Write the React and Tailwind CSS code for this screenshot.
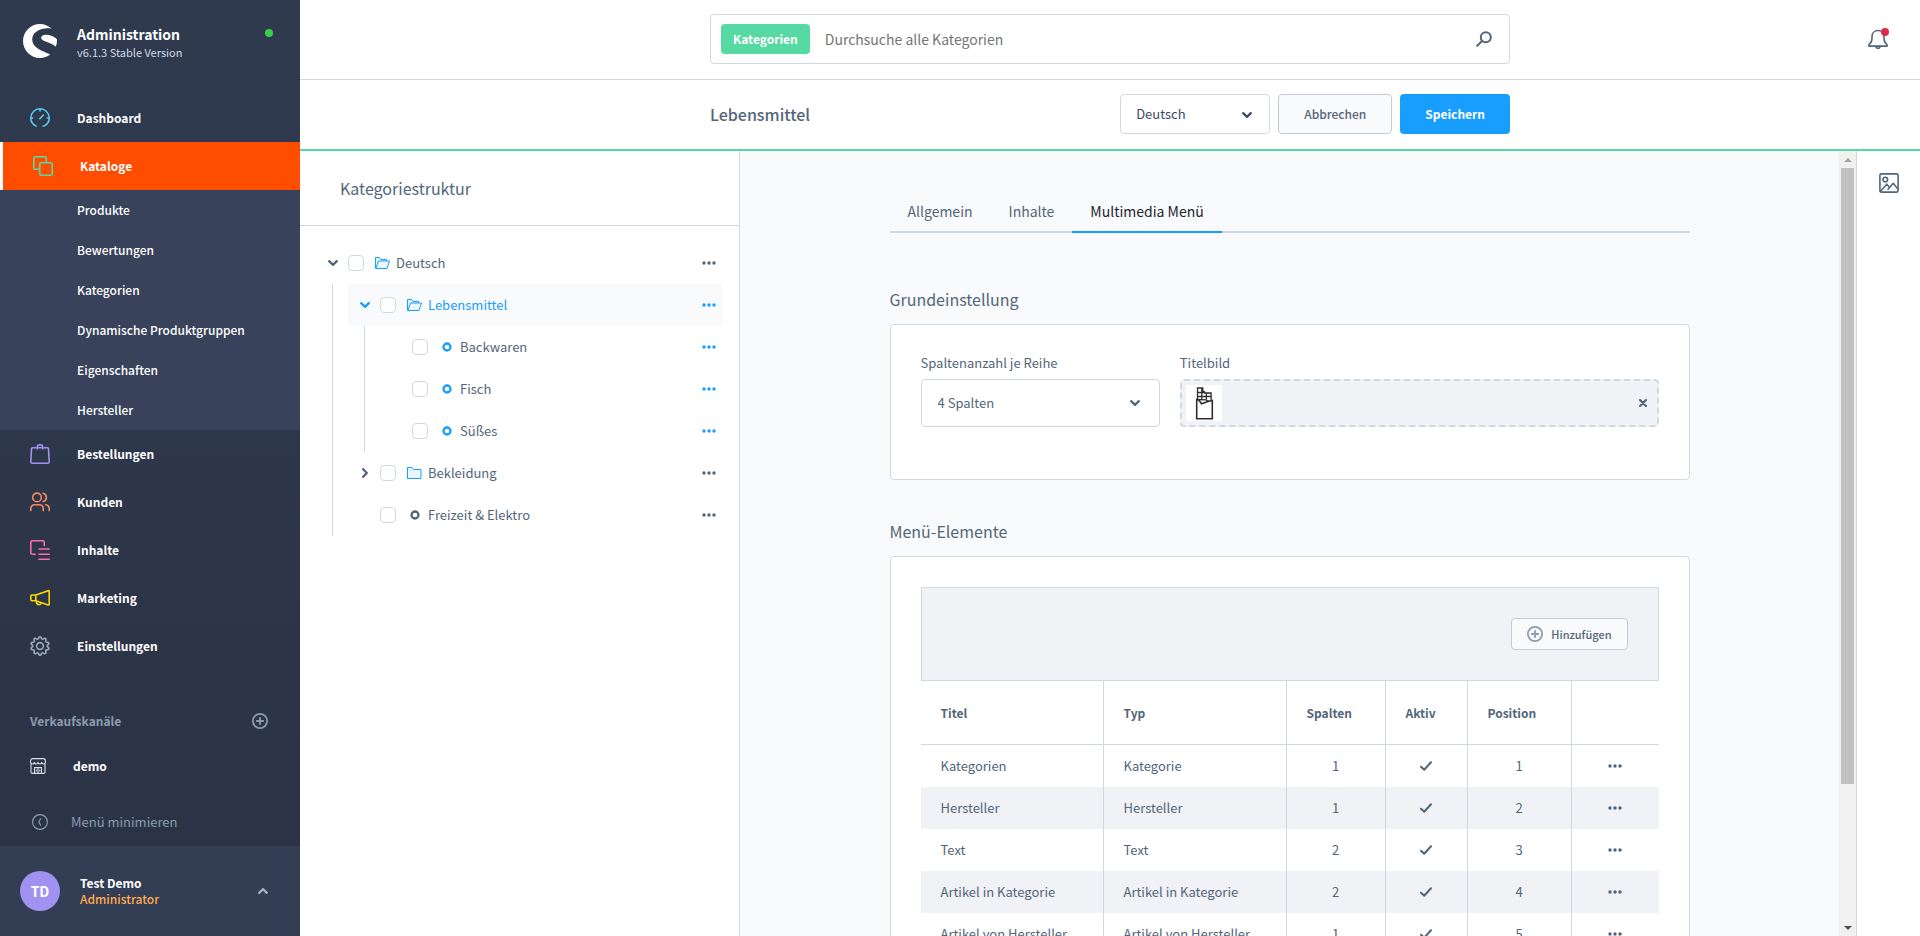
import { useState } from 'react';
import clsx from 'clsx';

const stroke = {
  fill: 'none',
  stroke: 'currentColor',
  strokeWidth: 1.6,
  strokeLinecap: 'round',
  strokeLinejoin: 'round',
};

const Logo = () => (
  <svg viewBox="0 0 34 34" className="size-[34px] shrink-0 text-white" fill="currentColor" aria-hidden="true">
    <path d="M28.6 4.6C25.4 1.7 21.4 0 17 0 7.6 0 0 7.6 0 17s7.6 17 17 17c3.8 0 7.4-1.3 10.2-3.4-.1-.3-1.2-.8-3.6-1.7C17.5 26.600 9.200 23 9.200 15.600 9.200 8.700 15.500 4.800 22.300 4.400c2.500-.2 5 .1 6.300.2z" />
    <path d="M32.8 14.2c-2.6-2-6.6-3.5-10-3.400-3.300.1-4.900 1.600-4.600 3.300.4 2.300 3.600 3.200 7 4.500 2.700 1 5.500 2 7.600 4.200 1-2.400 1.400-5 1.100-7.700-.3-.3-.7-.6-1.100-.9z" />
  </svg>
);

const DashboardIcon = () => (
  <svg viewBox="0 0 20 20" className="size-5" {...stroke}>
    <path d="M6.300 18H6C2.800 16.500.8 13.500.8 10a9.200 9.200 0 0 1 18.400 0c0 3.500-2 6.500-5.200 8h-.9" />
    <path d="M10 1v2M1 10h1.700M17.300 10H19M9.800 10.700l3.700-3.700" />
  </svg>
);

const CatalogIcon = () => (
  <svg viewBox="0 0 20 20" className="size-5" {...stroke}>
    <path d="M5.500 13.300H2.200C1.400 13.300.8 12.700.8 11.900V2.200C.8 1.400 1.400.8 2.200.8h9.700c.8 0 1.400.6 1.400 1.400v3.400" />
    <rect x="6.700" y="6.700" width="12.500" height="12.500" rx="1.400" />
  </svg>
);

const OrdersIcon = () => (
  <svg viewBox="0 0 20 20" className="size-5" {...stroke}>
    <path d="M5.600 3.700H2.700c-.7 0-1.200.5-1.200 1.200L.8 17.900c0 .8.5 1.300 1.300 1.300h15.800c.8 0 1.300-.5 1.300-1.300l-.7-13c0-.7-.5-1.200-1.200-1.200h-2.900M8.400 3.700h3.200" />
    <path d="M7.200 5V3.500a2.800 2.800 0 0 1 5.600 0V5" />
  </svg>
);

const CustomersIcon = () => (
  <svg viewBox="0 0 20 20" className="size-5" {...stroke}>
    <circle cx="7" cy="5.400" r="4.300" />
    <path d="M.8 18.600v-2c0-2.200 1.600-3.800 3.800-3.800h4.800c2.200 0 3.800 1.600 3.800 3.800v2M13.200 1.300a4.300 4.300 0 0 1 0 8.300M15.600 12.800c2.200.3 3.600 1.800 3.600 3.800v2" />
  </svg>
);

const ContentIcon = () => (
  <svg viewBox="0 0 20 20" className="size-5" {...stroke}>
    <path d="M5.300 14.200H2.200C1.400 14.200.8 13.600.8 12.800V2.200C.8 1.400 1.400.8 2.200.8h10.600c.8 0 1.400.6 1.400 1.400v3.200M9 9h10.200M9 14.200h10.200M9 19.200h10.200" />
  </svg>
);

const MarketingIcon = () => (
  <svg viewBox="0 0 20 20" className="size-5" {...stroke}>
    <path d="M5.800 7H2c-.7 0-1.200.4-1.200 1.100v3.500c0 .7.500 1.200 1.200 1.200h3.800M5.800 7v5.800M5.800 7l12.400-4.300c.6-.2 1 .1 1 .7v12.800c0 .6-.4.900-1 .7L5.800 12.800M6.300 13.200c.1 2 1 3.500 2.700 3.500 1.200 0 2-.7 2.100-1.700" />
  </svg>
);

const TEETH = 10;
const gearPath = Array.from({ length: TEETH * 4 }, (_, i) => {
  const radius = i % 4 < 2 ? 9.2 : 7.4;
  const angle = ((i - 0.5) / (TEETH * 4)) * Math.PI * 2 - Math.PI / 2;
  return `${i ? 'L' : 'M'}${(10 + radius * Math.cos(angle)).toFixed(2)} ${(10 + radius * Math.sin(angle)).toFixed(2)}`;
}).join('') + 'z';

const SettingsIcon = () => (
  <svg viewBox="0 0 20 20" className="size-5" {...stroke}>
    <path d={gearPath} />
    <circle cx="10" cy="10" r="3.400" />
  </svg>
);

const PlusCircle = () => (
  <svg viewBox="0 0 16 16" className="size-4" {...stroke} strokeWidth="1.800">
    <circle cx="8" cy="8" r="7.100" />
    <path d="M8 4.800v6.400M4.800 8h6.400" />
  </svg>
);

const StoreIcon = () => (
  <svg viewBox="0 0 16 16" className="size-4" {...stroke} strokeWidth="1.100">
    <path d="M2.500.6h11c1.200 0 1.900 1 1.900 2.300v1.400c0 1-.8 1.700-1.800 1.700s-1.900-.7-1.900-1.700c0 1-.8 1.700-1.800 1.700S8 5.300 8 4.300C8 5.300 7.100 6 6.100 6s-1.800-.7-1.800-1.700C4.300 5.300 3.500 6 2.400 6S.6 5.300.6 4.300V2.900C.6 1.600 1.300.6 2.500.6z" />
    <path d="M1 6v8.200c0 .8.500 1.200 1.200 1.200h11.600c.7 0 1.200-.4 1.200-1.200V6M4.500 15.400V9.600h7v5.800M8 9.600v5.800M6.200 12v1M9.800 12v1" />
  </svg>
);

const CollapseIcon = () => (
  <svg viewBox="0 0 16 16" className="size-4" {...stroke} strokeWidth="1.200">
    <circle cx="8" cy="8" r="7.400" />
    <path d="M8.600 4.800 6.800 8l1.800 3.200" />
  </svg>
);

const Chevron = ({ className }) => (
  <svg viewBox="0 0 10 10" className={clsx('size-[10px] shrink-0', className)} {...stroke} strokeWidth="2.300" aria-hidden="true">
    <path d="m1.200 3.200 3.800 3.600 3.800-3.600" />
  </svg>
);

const Dots = () => (
  <svg viewBox="0 0 14 4" className="h-1 w-[14px]" fill="currentColor" aria-hidden="true">
    <circle cx="2" cy="2" r="1.700" />
    <circle cx="7" cy="2" r="1.700" />
    <circle cx="12" cy="2" r="1.700" />
  </svg>
);

const SearchIcon = () => (
  <svg viewBox="0 0 16 16" className="size-4" {...stroke} strokeWidth="2">
    <circle cx="9.800" cy="6.200" r="5" />
    <path d="m6 10-4.800 4.800" />
  </svg>
);

const BellIcon = () => (
  <svg viewBox="0 0 22 22" className="size-[22px]" {...stroke}>
    <path d="M1.700 17.400c0-.6.300-.9.800-1.300C4.500 14.500 5 13 5 10.300V8.500C5 5 7.300 2.500 11 2.500S17 5 17 8.500v1.800c0 2.700.5 4.200 2.500 5.800.5.400.8.700.8 1.300 0 .4-.3.700-.7.700H2.400c-.4 0-.7-.3-.7-.7z" />
    <path d="M9 18.200c0 1.200.8 2 2 2s2-.8 2-2" />
  </svg>
);

const ImageIcon = () => (
  <svg viewBox="0 0 20 20" className="size-5" {...stroke}>
    <rect x=".9" y=".9" width="18.200" height="18.200" rx="1.500" />
    <circle cx="6.300" cy="6.500" r="2.300" />
    <path d="m1.500 18.300 6.300-7.100 2 2.300M9 16.200l5.200-5.900 4.700 5.600" />
  </svg>
);

const FolderOpen = () => (
  <svg viewBox="0 0 15 12" className="h-3 w-[15px] shrink-0 fill-[#e9f5ff]" stroke="#189eff" aria-hidden="true">
    <path d="M.5 11.500V.5h4l1.500 2h5.500v1.500" />
    <path d="M3.500 4h11l-2.500 7.500H.8z" />
  </svg>
);

const Folder = () => (
  <svg viewBox="0 0 15 12" className="h-3 w-[15px] shrink-0 fill-[#e9f5ff]" stroke="#189eff" aria-hidden="true">
    <path d="M.5.5h4.500l1.500 2h7.500v9H.5z" />
  </svg>
);

const Ring = ({ active }) => (
  <svg viewBox="0 0 10 10" className={clsx('size-[10px] shrink-0', active ? 'text-[#189eff]' : 'text-[#52667a]')} fill="none" stroke="currentColor" strokeWidth="2.300" aria-hidden="true">
    <circle cx="5" cy="5" r="3.500" />
  </svg>
);

const Chocolate = () => (
  <svg viewBox="0 0 36 36" className="size-9 bg-white" fill="none" stroke="#2f2f2f" strokeWidth="1.300" role="img" aria-label="Schokolade">
    <path d="M11.500 14V3h5.300v2.800l2 1.200v1h6.300v7M11.500 7.500h7.500M11.500 11.500h13.600M15.800 3.500V14M20.300 8v6.500" />
    <path d="M10.700 14.500v19.300h15.600V15.500l-4.300 1-6.500 2.300-2.700-3.800z" strokeWidth="1.600" />
    <path d="M10.700 14.500l9.300.3 3 1.500" />
  </svg>
);

const navItems = [
  { label: 'Dashboard', icon: DashboardIcon, color: 'text-[#5ac8ec]' },
  {
    label: 'Kataloge',
    icon: CatalogIcon,
    color: 'text-[#57d9a3]',
    active: true,
    children: ['Produkte', 'Bewertungen', 'Kategorien', 'Dynamische Produktgruppen', 'Eigenschaften', 'Hersteller'],
  },
  { label: 'Bestellungen', icon: OrdersIcon, color: 'text-[#a092f0]' },
  { label: 'Kunden', icon: CustomersIcon, color: 'text-[#f88962]' },
  { label: 'Inhalte', icon: ContentIcon, color: 'text-[#ff68b4]' },
  { label: 'Marketing', icon: MarketingIcon, color: 'text-[#ffd700]' },
  { label: 'Einstellungen', icon: SettingsIcon, color: 'text-[#9aa8b5]' },
];

const tree = [
  {
    label: 'Deutsch',
    open: true,
    children: [
      {
        label: 'Lebensmittel',
        open: true,
        selected: true,
        highlight: true,
        children: [
          { label: 'Backwaren', highlight: true },
          { label: 'Fisch', highlight: true },
          { label: 'Süßes', highlight: true },
        ],
      },
      { label: 'Bekleidung', folder: true },
      { label: 'Freizeit & Elektro' },
    ],
  },
];

const elements = [
  { title: 'Kategorien', type: 'Kategorie', columns: 1 },
  { title: 'Hersteller', type: 'Hersteller', columns: 1 },
  { title: 'Text', type: 'Text', columns: 2 },
  { title: 'Artikel in Kategorie', type: 'Artikel in Kategorie', columns: 2 },
  { title: 'Artikel von Hersteller', type: 'Artikel von Hersteller', columns: 1 },
];

const tabs = ['Allgemein', 'Inhalte', 'Multimedia Menü'];

function Sidebar() {
  return (
    <aside className="flex w-[300px] shrink-0 flex-col bg-linear-to-b from-[#303a4f] to-[#2a3345] text-white">
      <div className="flex h-[94px] items-start pt-6 pr-[27px] pl-[23px]">
        <Logo />
        <div className="ml-5 flex-1">
          <p className="text-[14px] leading-5 font-bold">Administration</p>
          <p className="text-[11px] leading-4 text-[#d1d9e0]">v6.1.3 Stable Version</p>
        </div>
        <span className="mt-[5px] size-2 rounded-full bg-[#37d046]"></span>
      </div>

      <nav className="text-[12px]">
        <ul>
          {navItems.map(({ label, icon: Icon, color, active, children }) => (
            <li key={label}>
              <a
                href="#"
                className={clsx('flex h-12 items-center pl-[30px] font-bold', active && 'border-l-3 border-white bg-[#ff4d00]')}
              >
                <span className={color}><Icon /></span>
                <span className="ml-[27px]">{label}</span>
              </a>
              {children && (
                <ul className="bg-[#38425b]">
                  {children.map((child) => (
                    <li key={child}>
                      <a href="#" className="flex h-10 items-center pl-[77px] font-medium">{child}</a>
                    </li>
                  ))}
                </ul>
              )}
            </li>
          ))}
        </ul>
      </nav>

      <div className="mt-[30px] text-[12px]">
        <div className="flex h-[42px] items-center justify-between pr-8 pl-[30px] text-[#8a9cb0]">
          <h2 className="font-bold">Verkaufskanäle</h2>
          <button type="button" aria-label="Verkaufskanal hinzufügen"><PlusCircle /></button>
        </div>
        <a href="#" className="flex h-12 items-center pl-[30px] font-bold">
          <span className="text-[#d8dde6]"><StoreIcon /></span>
          <span className="ml-[27px]">demo</span>
        </a>
      </div>

      <button type="button" className="mt-auto flex h-12 items-center pl-8 text-[13px] text-[#8a9cb0]">
        <CollapseIcon />
        <span className="ml-[23px]">Menü minimieren</span>
      </button>
      <div className="flex h-[90px] items-center bg-[#333d54] pr-8 pl-5">
        <span className="flex size-10 items-center justify-center rounded-full bg-[#a092f0] text-[14px] font-bold">TD</span>
        <div className="ml-5 flex-1 text-[12px] leading-4">
          <p className="font-bold">Test Demo</p>
          <p className="font-medium text-[#ffab4f]">Administrator</p>
        </div>
        <button type="button" aria-label="Benutzermenü" className="text-[#a3b1bf]"><Chevron className="rotate-180" /></button>
      </div>
    </aside>
  );
}

function TreeNode({ node }) {
  const hasToggle = node.open || node.folder;
  return (
    <li>
      <div className={clsx('flex h-[42px] items-center rounded pr-[7px] pl-3', node.selected && 'bg-[#f9fafb]')}>
        {hasToggle && (
          <button type="button" aria-label={`${node.label} umschalten`} className={node.selected ? 'text-[#189eff]' : 'text-[#52667a]'}>
            <Chevron className={!node.open && '-rotate-90'} />
          </button>
        )}
        <label className={clsx('flex flex-1 items-center', hasToggle ? 'ml-[10px]' : 'ml-5')}>
          <input type="checkbox" className="size-4 appearance-none rounded border border-[#d1d9e0] bg-white" />
          <span className="mr-[6px] ml-[11px] flex w-[15px] justify-center">
            {node.open ? <FolderOpen /> : node.folder ? <Folder /> : <Ring active={node.highlight} />}
          </span>
          <span className={clsx('text-[13px]', node.selected && 'text-[#189eff]')}>{node.label}</span>
        </label>
        <button type="button" aria-label={`Aktionen für ${node.label}`} className={node.highlight ? 'text-[#189eff]' : 'text-[#52667a]'}>
          <Dots />
        </button>
      </div>
      {node.children && (
        <ul className="ml-4 border-l border-[#d1d9e0] pl-[15px]">
          {node.children.map((child) => <TreeNode key={child.label} node={child} />)}
        </ul>
      )}
    </li>
  );
}

function Card({ title, className, children }) {
  return (
    <section className="mb-10">
      <h2 className="mb-[14px] text-[16px] leading-[22px]">{title}</h2>
      <div className={clsx('rounded border border-[#d1d9e0] bg-white px-[30px] pt-[30px]', className)}>{children}</div>
    </section>
  );
}

function ElementsTable() {
  const cell = 'border-r border-[#d1d9e0] px-5';
  return (
    <table className="w-full table-fixed border-separate border-spacing-0 text-[13px]">
      <thead>
        <tr className="h-16 text-left text-[12px] font-bold [&>th]:border-b">
          <th scope="col" className={cell}>Titel</th>
          <th scope="col" className={cell}>Typ</th>
          <th scope="col" className={clsx(cell, 'w-[99px]')}>Spalten</th>
          <th scope="col" className={clsx(cell, 'w-[82px]')}>Aktiv</th>
          <th scope="col" className={clsx(cell, 'w-[104px]')}>Position</th>
          <th scope="col" aria-label="Aktionen" className="w-[87px] border-[#d1d9e0]"></th>
        </tr>
      </thead>
      <tbody>
        {elements.map((el, i) => (
          <tr key={el.title} className="h-[42px] even:bg-[#f0f2f5]">
            <td className={cell}>{el.title}</td>
            <td className={cell}>{el.type}</td>
            <td className={clsx(cell, 'text-center')}>{el.columns}</td>
            <td className={cell}>
              <svg viewBox="0 0 12 10" className="mx-auto h-[10px] w-3" {...stroke} strokeWidth="2" role="img" aria-label="Aktiv">
                <path d="M1 5.700 4.200 8.700 11 1.300" />
              </svg>
            </td>
            <td className={clsx(cell, 'text-center')}>{i + 1}</td>
            <td>
              <button type="button" aria-label={`Aktionen für ${el.title}`} className="mx-auto flex"><Dots /></button>
            </td>
          </tr>
        ))}
      </tbody>
    </table>
  );
}

export default function App() {
  const [activeTab, setActiveTab] = useState('Multimedia Menü');

  return (
    <div className="flex h-screen overflow-hidden bg-white font-['Noto_Sans_CJK_SC','Source_Sans_Pro',sans-serif] text-[#52667a]">
      <Sidebar />

      <div className="flex min-w-0 flex-1 flex-col">
        <header className="grid h-20 shrink-0 grid-cols-[1fr_minmax(0,800px)_1fr] items-start border-b border-[#d1d9e0] pt-[14px]">
          <div className="col-start-2 flex h-[50px] items-center rounded border border-[#d1d9e0] pr-[17px] pl-[10px]">
            <span className="flex h-[30px] items-center rounded bg-[#57d9a3] px-3 text-[12px] font-bold text-white">Kategorien</span>
            <input
              type="search"
              aria-label="Suche"
              placeholder="Durchsuche alle Kategorien"
              className="ml-[15px] min-w-0 flex-1 text-[14px] outline-none placeholder:text-[#757575]"
            />
            <button type="button" aria-label="Suchen"><SearchIcon /></button>
          </div>
          <button type="button" aria-label="Benachrichtigungen" className="mr-[31px] flex h-[50px] items-center justify-self-end">
            <span className="relative">
              <BellIcon />
              <span className="absolute top-0 right-0 size-2 rounded-full bg-[#de294c]"></span>
            </span>
          </button>
        </header>

        <div className="grid h-[71px] shrink-0 grid-cols-[1fr_minmax(0,800px)_1fr] items-start border-b-2 border-[#57d9a3] pt-[14px]">
          <div className="col-start-2 flex items-center gap-2">
            <h1 className="flex-1 text-[16px] font-medium">Lebensmittel</h1>
            <div className="relative">
              <select aria-label="Sprache" className="h-10 w-[150px] appearance-none rounded border border-[#d1d9e0] bg-white pl-[15px] text-[13px] text-[#3d4a63]">
                <option>Deutsch</option>
              </select>
              <Chevron className="pointer-events-none absolute top-4 right-[18px] text-[#3d4a63]" />
            </div>
            <button type="button" className="h-10 rounded border border-[#c3ccd6] bg-[#f9fafb] px-[25px] text-[12px] font-medium">Abbrechen</button>
            <button type="button" className="h-10 rounded bg-[#189eff] px-[25px] text-[12px] font-bold text-white">Speichern</button>
          </div>
        </div>

        <div className="flex min-h-0 flex-1">
          <section className="w-[440px] shrink-0 border-r border-[#d1d9e0]">
            <h2 className="flex h-[75px] items-center border-b border-[#d1d9e0] pl-10 text-[16px]">Kategoriestruktur</h2>
            <ul className="p-4">
              {tree.map((node) => <TreeNode key={node.label} node={node} />)}
            </ul>
          </section>

          <main className="min-w-0 flex-1 overflow-y-auto bg-[#f9fafb] [scrollbar-width:none]">
            <div className="mx-auto max-w-[800px] pt-10">
              <div role="tablist" className="mb-[55px] flex border-b-2 border-[#d1d9e0] text-[14px]">
                {tabs.map((tab) => (
                  <button
                    key={tab}
                    type="button"
                    role="tab"
                    aria-selected={tab === activeTab}
                    onClick={() => setActiveTab(tab)}
                    className={clsx(
                      '-mb-[2px] h-[42px] border-b-2 px-[18px]',
                      tab === activeTab ? 'border-[#189eff] text-[#1d2530]' : 'border-transparent',
                    )}
                  >
                    {tab}
                  </button>
                ))}
              </div>

              <Card title="Grundeinstellung" className="pb-[52px]">
                <div className="grid grid-cols-[1fr_2fr] gap-5 text-[13px]">
                  <div>
                    <label htmlFor="columns" className="mb-2 block leading-4">Spaltenanzahl je Reihe</label>
                    <div className="relative">
                      <select id="columns" className="h-12 w-full appearance-none rounded border border-[#d1d9e0] bg-white pl-4">
                        <option>4 Spalten</option>
                      </select>
                      <Chevron className="pointer-events-none absolute top-[19px] right-5" />
                    </div>
                  </div>
                  <div>
                    <p className="mb-2 leading-4">Titelbild</p>
                    <div className="flex h-12 items-center justify-between rounded border-2 border-dashed border-[#d1d9e0] bg-[#f0f2f5] pr-[10px] pl-1">
                      <Chocolate />
                      <button type="button" aria-label="Titelbild entfernen">
                        <svg viewBox="0 0 8 8" className="size-2" {...stroke} strokeWidth="2.200">
                          <path d="m1 1 6 6M7 1 1 7" />
                        </svg>
                      </button>
                    </div>
                  </div>
                </div>
              </Card>

              <Card title="Menü-Elemente" className="pb-[30px]">
                <div className="flex justify-end border border-[#d1d9e0] bg-[#f0f2f5] p-[30px]">
                  <button type="button" className="flex h-8 items-center gap-2 rounded border border-[#c3ccd6] bg-[#f9fafb] px-[15px] text-[11px] font-medium">
                    <span className="text-[#8a9cb0]"><PlusCircle /></span>
                    Hinzufügen
                  </button>
                </div>
                <ElementsTable />
              </Card>
            </div>
          </main>

          <div className="flex w-[17px] shrink-0 flex-col items-center bg-[#f1f1f1]" aria-hidden="true">
            <span className="flex h-[17px] items-center">
              <svg viewBox="0 0 8 4" className="h-1 w-2 fill-[#a3a3a3]"><path d="M0 4 4 0l4 4z" /></svg>
            </span>
            <div className="flex w-[13px] flex-1 flex-col">
              <span className="basis-[82%] bg-[#c1c1c1]"></span>
            </div>
            <span className="flex h-[17px] items-center">
              <svg viewBox="0 0 8 4" className="h-1 w-2 fill-[#505050]"><path d="m0 0 4 4 4-4z" /></svg>
            </span>
          </div>
          <aside className="flex w-16 shrink-0 justify-center border-l border-[#d1d9e0] pt-[22px]">
            <button type="button" aria-label="Medien" className="size-5"><ImageIcon /></button>
          </aside>
        </div>
      </div>
    </div>
  );
}
